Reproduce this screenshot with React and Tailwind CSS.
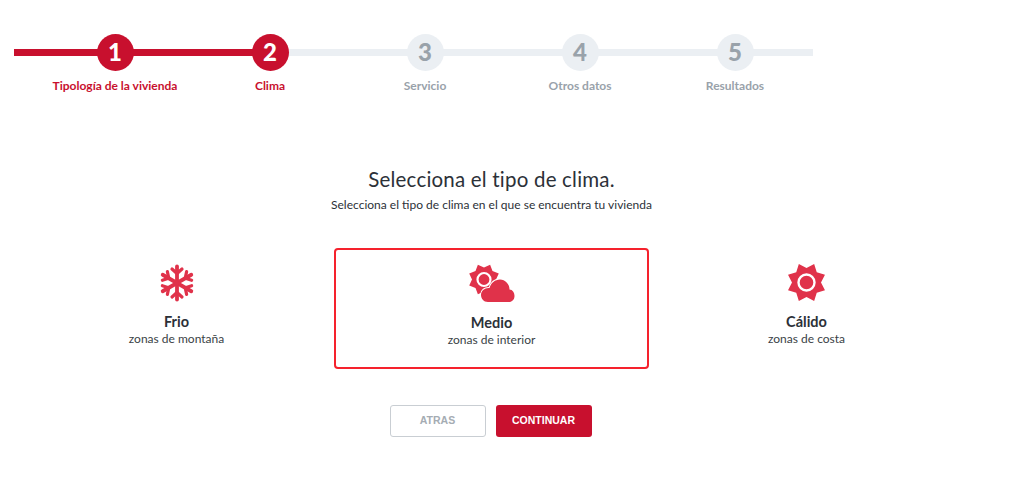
import React from 'react';

const steps = [
  { n: '1', label: 'Tipología de la vivienda', active: true },
  { n: '2', label: 'Clima', active: true },
  { n: '3', label: 'Servicio', active: false },
  { n: '4', label: 'Otros datos', active: false },
  { n: '5', label: 'Resultados', active: false },
];

const starPoints = (cx, cy, outer, inner, count, rot) => {
  const pts = [];
  for (let i = 0; i < count * 2; i++) {
    const r = i % 2 === 0 ? outer : inner;
    const a = (Math.PI * i) / count + rot;
    pts.push(`${(cx + r * Math.sin(a)).toFixed(2)},${(cy - r * Math.cos(a)).toFixed(2)}`);
  }
  return pts.join(' ');
};

const Snowflake = () => (
  <svg width="36" height="38" viewBox="0 0 36 38" fill="none" stroke="#e0324a" strokeLinecap="round">
    <g transform="translate(18 19)">
      {[0, 60, 120, 180, 240, 300].map((a) => (
        <g key={a} transform={`rotate(${a})`}>
          <path d="M0 0V-16.5" strokeWidth="3.8" />
          <path d="M-5 -14L0 -9.5L5 -14" strokeWidth="3.2" />
        </g>
      ))}
    </g>
  </svg>
);

const Sun = () => (
  <svg width="38" height="39" viewBox="0 0 38 39">
    <polygon points={starPoints(18.5, 19.5, 20, 14.5, 8, Math.PI / 8)} fill="#e0324a" />
    <circle cx="18.5" cy="19.5" r="8" fill="none" stroke="#fff" strokeWidth="2.4" />
  </svg>
);

const SunCloud = () => (
  <svg width="46" height="39" viewBox="0 0 46 39">
    <polygon points={starPoints(15, 15.5, 16, 12, 8, Math.PI / 8)} fill="#e0324a" />
    <circle cx="15" cy="15.5" r="6.5" fill="none" stroke="#fff" strokeWidth="2.2" />
    <path
      d="M19 38C14.5 38 12 34.5 12 31C12 26.5 16 23.5 20.5 24C22 19 26 15.5 31 15.5C36 15.5 40.5 20 40.5 25.5C43.5 25.5 45.5 28.5 45.5 32C45.5 35.5 43 38 40 38Z"
      fill="#e0324a"
      stroke="#fff"
      strokeWidth="2"
      paintOrder="stroke"
    />
  </svg>
);

const Option = ({ icon, title, sub, selected }) => (
  <div
    className={`flex h-[121px] flex-col items-center rounded-[4px] border-2 ${
      selected ? 'border-[#f5222d] pt-[14px]' : 'border-transparent pt-[13px]'
    }`}
  >
    <div className="flex h-[39px] items-end justify-center">{icon}</div>
    <div className="mt-[10px] text-[14.5px] font-bold leading-[20px] text-[#2c3138]">{title}</div>
    <div className="mt-[-1px] text-[12px] leading-[16px] text-[#3a3f46]">{sub}</div>
  </div>
);

export default function App() {
  return (
    <div className="h-[477px] overflow-hidden bg-white font-['Lato',sans-serif]">
      {/* Stepper */}
      <div className="relative ml-[14px] w-[799px] pt-[34px]">
        <div className="absolute left-0 right-0 top-[49px] h-[7px] bg-[#ebeff3]" />
        <div className="absolute left-0 top-[49px] h-[7px] w-[256px] bg-[#c8102e]" />
        <div className="relative flex pl-[23.5px]">
          {steps.map((s) => (
            <div key={s.n} className="flex w-[155px] flex-col items-center">
              <div
                className={`flex h-[37px] w-[37px] items-center justify-center rounded-full pb-[2px] text-[24px] font-black ${
                  s.active ? 'bg-[#c8102e] text-white' : 'bg-[#ebeff3] text-[#99a2aa]'
                }`}
              >
                {s.n}
              </div>
              <div
                className={`mt-[8px] text-[12px] font-bold leading-[14px] ${
                  s.active ? 'text-[#c8102e]' : 'text-[#99a2aa]'
                }`}
              >
                {s.label}
              </div>
            </div>
          ))}
        </div>
      </div>

      <div className="ml-[19px] w-[945px]">
        {/* Heading */}
        <div className="mt-[73px] text-center">
          <h1 className="text-[20.5px] font-normal leading-[26px] tracking-[0.2px] text-[#2c3138]">
            Selecciona el tipo de clima.
          </h1>
          <p className="mt-[5px] text-[12px] leading-[16px] text-[#2c3138]">
            Selecciona el tipo de clima en el que se encuentra tu vivienda
          </p>
        </div>

        {/* Options */}
        <div className="mt-[35px] grid grid-cols-3">
          <Option icon={<Snowflake />} title="Frio" sub="zonas de montaña" />
          <Option icon={<SunCloud />} title="Medio" sub="zonas de interior" selected />
          <Option icon={<Sun />} title="Cálido" sub="zonas de costa" />
        </div>

        {/* Buttons */}
        <div className="mt-[36px] flex justify-center gap-[10px] pr-[2px]">
          <button className="h-[32px] w-[96px] rounded-[3px] border border-[#c9ced3] bg-white font-['Liberation_Sans',sans-serif] text-[10.5px] font-bold text-[#a5acb3]">
            ATRAS
          </button>
          <button className="h-[32px] w-[96px] rounded-[3px] bg-[#c8102e] font-['Liberation_Sans',sans-serif] text-[10.5px] font-bold text-white">
            CONTINUAR
          </button>
        </div>
      </div>
    </div>
  );
}
